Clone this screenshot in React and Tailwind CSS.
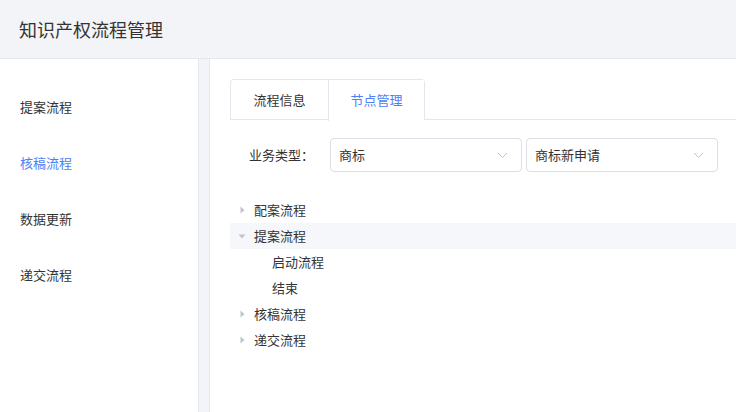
import React from "react";

const font = { fontFamily: '"Noto Sans CJK SC", "Noto Sans", sans-serif' };

function Chevron() {
  return (
    <svg width="11" height="7" viewBox="0 0 11 7" className="shrink-0">
      <path d="M1 1 L5.5 5.5 L10 1" fill="none" stroke="#c0c4cc" strokeWidth="1" />
    </svg>
  );
}

function Select({ value }) {
  return (
    <div className="w-[192px] h-[34px] border border-[#dcdfe6] rounded-[4px] flex items-center justify-between pl-[8px] pr-[13px] text-[13px] text-[#333] bg-white">
      <span>{value}</span>
      <Chevron />
    </div>
  );
}

function Arrow({ open }) {
  return (
    <span className="w-[24px] flex justify-center items-center">
      {open ? (
        <svg width="8" height="5" viewBox="0 0 8 5">
          <path d="M0.5 0.5 L7.5 0.5 L4 4.5 Z" fill="#c0c4cc" />
        </svg>
      ) : (
        <svg width="5" height="8" viewBox="0 0 5 8">
          <path d="M0.5 0.5 L4.5 4 L0.5 7.5 Z" fill="#c0c4cc" />
        </svg>
      )}
    </span>
  );
}

function TreeRow({ label, open, leaf, active }) {
  return (
    <div className={`h-[26px] flex items-center text-[13px] text-[#333] ${active ? "bg-[#f5f7fa]" : ""}`}>
      {leaf ? <span className="w-[42px]" /> : <Arrow open={open} />}
      <span>{label}</span>
    </div>
  );
}

export default function App() {
  return (
    <div style={font} className="w-[736px] h-[412px] overflow-hidden bg-[#f3f4f8] flex flex-col">
      <div className="h-[59px] shrink-0 border-b border-[#e4e7ed] flex items-center pl-[19px] text-[18px] text-[#333]">
        知识产权流程管理
      </div>
      <div className="flex flex-1 min-h-0">
        <div className="w-[199px] shrink-0 bg-white border-r border-[#e4e7ed] pt-[20px]">
          {["提案流程", "核稿流程", "数据更新", "递交流程"].map((t, i) => (
            <div
              key={t}
              className={`h-[56px] flex items-center pl-[20px] text-[13px] ${i === 1 ? "text-[#4f7ef8]" : "text-[#333]"}`}
            >
              {t}
            </div>
          ))}
        </div>
        <div className="flex-1 ml-[10px] bg-white border-l border-[#e4e7ed] pl-[20px] pt-[20px] min-w-0">
          <div className="flex border-b border-[#e4e7ed] h-[41px]">
            <div className="flex border border-b-0 border-[#e4e7ed] rounded-t-[4px] h-[41px]">
              <div className="w-[97px] h-[40px] flex items-center justify-center text-[13px] text-[#333]">
                流程信息
              </div>
              <div className="w-[96px] h-[41px] border-l border-[#e4e7ed] bg-white flex items-center justify-center text-[13px] text-[#4f7ef8] pb-[1px]">
                节点管理
              </div>
            </div>
          </div>
          <div className="flex items-center mt-[18px] gap-[4px]">
            <div className="w-[96px] text-right pr-[12px] text-[13px] text-[#333]">业务类型：</div>
            <Select value="商标" />
            <Select value="商标新申请" />
          </div>
          <div className="mt-[25px]">
            <TreeRow label="配案流程" />
            <TreeRow label="提案流程" open active />
            <TreeRow label="启动流程" leaf />
            <TreeRow label="结束" leaf />
            <TreeRow label="核稿流程" />
            <TreeRow label="递交流程" />
          </div>
        </div>
      </div>
    </div>
  );
}
